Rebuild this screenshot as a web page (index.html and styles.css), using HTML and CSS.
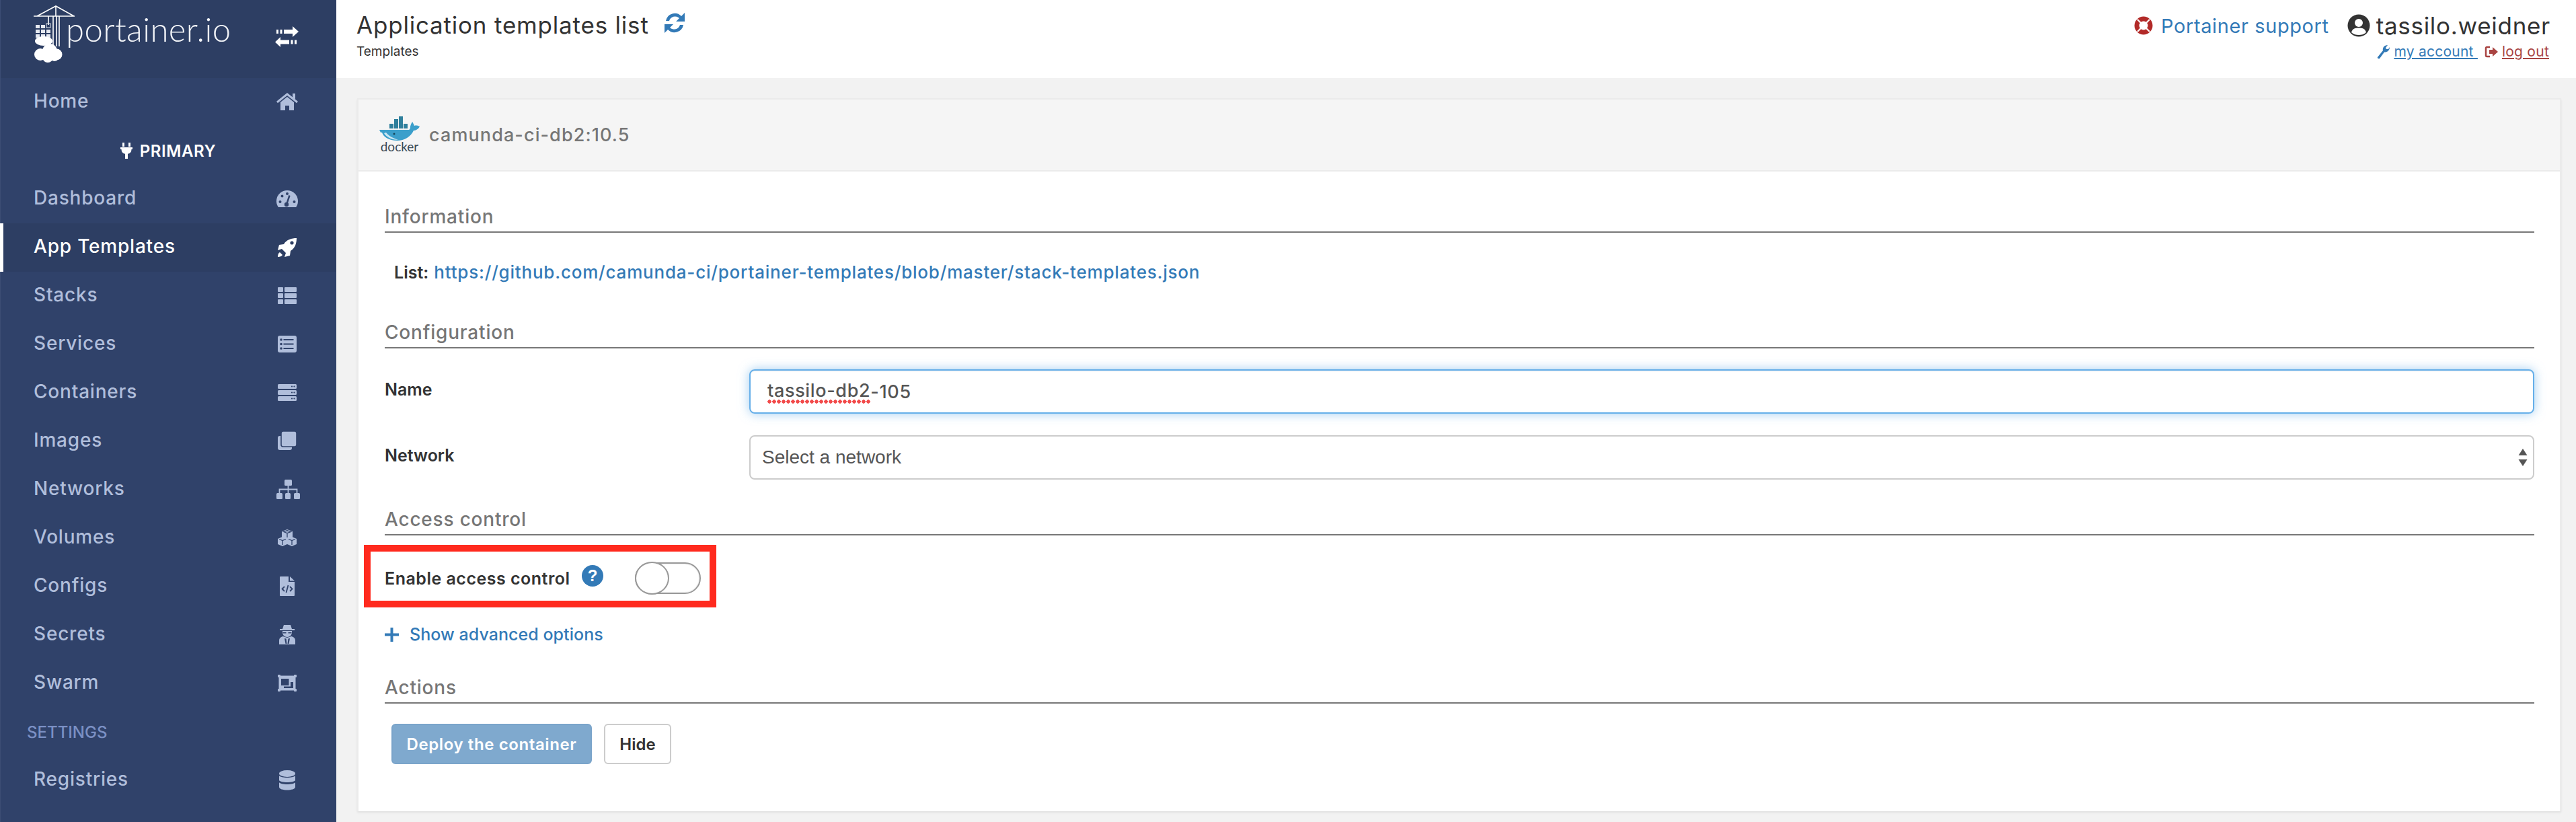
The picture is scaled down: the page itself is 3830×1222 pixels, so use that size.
FILE: index.html
```html
<!DOCTYPE html>
<html lang="en">
<head>
<meta charset="utf-8">
<title>Portainer - Application templates list</title>
<link rel="stylesheet" href="styles.css">
</head>
<body>
<div class="app">
  <aside class="sidebar">
    <div class="brand">
      <div class="logo">
        <svg class="logo-mark" viewBox="0 0 46 90" width="46" height="90">
          <g fill="none" stroke="#fff" stroke-width="1.6">
            <path d="M0 17H61M5 17L33 2L60 17M33 2V17"/>
            <path d="M29 17V62M34 17V62M38 17V62"/>
            <path d="M22 17V30"/>
          </g>
          <g fill="#e6e9f0">
            <rect x="3" y="30" width="6" height="5"/><rect x="3" y="37" width="6" height="5"/><rect x="3" y="44" width="6" height="5"/>
            <rect x="11" y="30" width="6" height="5"/><rect x="11" y="37" width="6" height="5"/><rect x="11" y="44" width="6" height="5"/>
            <rect x="19" y="37" width="6" height="5"/><rect x="19" y="44" width="6" height="5"/>
            <rect x="19" y="28" width="6" height="6" fill="none" stroke="#e6e9f0"/>
          </g>
          <g fill="#fff">
            <ellipse cx="15" cy="54" rx="13" ry="7"/>
            <circle cx="24" cy="69" r="11"/><circle cx="10" cy="74" r="9"/><circle cx="34" cy="74" r="8.500"/><circle cx="21" cy="78" r="8"/><circle cx="31" cy="78" r="6"/>
          </g>
        </svg>
        <span class="logo-text">portainer.io</span>
      </div>
      <svg class="icon swap" viewBox="0 0 36 36" width="36" height="36" fill="#fff">
        <path d="M2 8h3v6H2zM7.500 8h3v6h-3zM13 8h13V3l9 8-9 8v-5H13z"/>
        <path d="M23.500 23.500h3v6h-3zM29 23.500h3v6h-3zM21 23.500H8V19L0 26.500 8 34v-4.500h13z"/>
      </svg>
    </div>
    <nav class="nav">
      <a class="nav-row">
        <span>Home</span>
        <svg class="icon" viewBox="0 0 36 36" width="36" height="36"><path d="M3 18L18 6L33 18" fill="none" stroke="currentColor" stroke-width="3"/><path d="M26 5h4v9l-4-3zM8 18L18 10L28 18V30H21V23H15V30H8z" fill="currentColor"/></svg>
      </a>
      <div class="nav-endpoint">
        <svg viewBox="0 0 20 24" width="20" height="24"><path d="M4 0h3v6H4zM13 0h3v6h-3zM1 7h18v3h-1.500a7 7 0 0 1-5.500 6.800V24H8v-7.200A7 7 0 0 1 2.500 10H1z" fill="#fff"/></svg>
        <span>PRIMARY</span>
      </div>
      <a class="nav-row">
        <span>Dashboard</span>
        <svg class="icon" viewBox="0 0 36 36" width="36" height="36"><path d="M4.800 30A16 16 0 1 1 31.200 30Z" fill="currentColor"/><g fill="#30426a"><circle cx="7.500" cy="22" r="2"/><circle cx="10.500" cy="13.500" r="2"/><circle cx="18" cy="10" r="2"/><circle cx="28.500" cy="22" r="2"/><circle cx="17" cy="26" r="3.200"/></g><path d="M17 26L21.500 12.500" stroke="#30426a" stroke-width="2.400"/></svg>
      </a>
      <a class="nav-row active">
        <span>App Templates</span>
        <svg class="icon" viewBox="0 0 36 36" width="36" height="36"><path d="M32 4C25 4 17 6 13 13L6 14L4 22L10 20L16 26L14 32L22 30L23 23C30 19 32 11 32 4Z" fill="currentColor"/><path d="M7 25C5 26 4 29 4 32C7 32 10 31 11 29Z" fill="currentColor"/><circle cx="25" cy="11" r="2.600" fill="#2d3e63"/></svg>
      </a>
      <a class="nav-row">
        <span>Stacks</span>
        <svg class="icon" viewBox="0 0 36 36" width="36" height="36" fill="currentColor"><rect x="4" y="5" width="8" height="7" rx="1"/><rect x="14" y="5" width="18" height="7" rx="1"/><rect x="4" y="14" width="8" height="7" rx="1"/><rect x="14" y="14" width="18" height="7" rx="1"/><rect x="4" y="23" width="8" height="7" rx="1"/><rect x="14" y="23" width="18" height="7" rx="1"/></svg>
      </a>
      <a class="nav-row">
        <span>Services</span>
        <svg class="icon" viewBox="0 0 36 36" width="36" height="36"><rect x="4" y="5" width="28" height="25" rx="3" fill="currentColor"/><g fill="#30426a"><circle cx="9" cy="11" r="1.800"/><circle cx="9" cy="17.500" r="1.800"/><circle cx="9" cy="24" r="1.800"/><rect x="12.500" y="10" width="15" height="2"/><rect x="12.500" y="16.500" width="15" height="2"/><rect x="12.500" y="23" width="15" height="2"/></g></svg>
      </a>
      <a class="nav-row">
        <span>Containers</span>
        <svg class="icon" viewBox="0 0 36 36" width="36" height="36"><g fill="currentColor"><rect x="4" y="5" width="28" height="7" rx="1.500"/><rect x="4" y="14" width="28" height="7" rx="1.500"/><rect x="4" y="23" width="28" height="7" rx="1.500"/></g><g fill="#30426a"><circle cx="25" cy="8.500" r="1.100"/><circle cx="28.500" cy="8.500" r="1.100"/><circle cx="25" cy="17.500" r="1.100"/><circle cx="28.500" cy="17.500" r="1.100"/><circle cx="25" cy="26.500" r="1.100"/><circle cx="28.500" cy="26.500" r="1.100"/></g></svg>
      </a>
      <a class="nav-row">
        <span>Images</span>
        <svg class="icon" viewBox="0 0 36 36" width="36" height="36"><rect x="4" y="10" width="21" height="21" rx="3" fill="currentColor"/><rect x="9" y="3" width="23" height="23" rx="3" fill="currentColor" stroke="#30426a" stroke-width="1.600"/></svg>
      </a>
      <a class="nav-row">
        <span>Networks</span>
        <svg class="icon" viewBox="0 0 36 36" width="36" height="36"><g fill="currentColor"><rect x="14" y="3" width="11" height="9" rx="1.500"/><rect x="2" y="23" width="9" height="9" rx="1.500"/><rect x="15" y="23" width="8" height="9" rx="1.500"/><rect x="28" y="23" width="9" height="9" rx="1.500"/></g><path d="M19.500 12V23M6.500 23V17.500H32.500V23" fill="none" stroke="currentColor" stroke-width="1.800"/></svg>
      </a>
      <a class="nav-row">
        <span>Volumes</span>
        <svg class="icon" viewBox="0 0 36 36" width="36" height="36"><g fill="currentColor"><path d="M18 5L26 8V17L18 20L10 17V8Z"/><path d="M11 16L18 19V27L11 30L4 27V19Z"/><path d="M25 16L32 19V27L25 30L18 27V19Z"/></g><g fill="none" stroke="#30426a" stroke-width="1.300"><path d="M12.500 8.500L18 10.500L23.500 8.500L18 6.800ZM18 10.500V17"/><path d="M6 19.500L11 21.500L16 19.500M11 21.500V28"/><path d="M20 19.500L25 21.500L30 19.500M25 21.500V28"/></g></svg>
      </a>
      <a class="nav-row">
        <span>Configs</span>
        <svg class="icon" viewBox="0 0 36 36" width="36" height="36"><path d="M7 4A1 1 0 0 1 8 3H20V11H29V31A1 1 0 0 1 28 32H8A1 1 0 0 1 7 31Z" fill="currentColor"/><path d="M22 3L29 9.500H22Z" fill="currentColor"/><path d="M14 18L10.500 21.500L14 25M22 18L25.500 21.500L22 25M19.500 16L16.500 27" fill="none" stroke="#30426a" stroke-width="1.800"/></svg>
      </a>
      <a class="nav-row">
        <span>Secrets</span>
        <svg class="icon" viewBox="0 0 36 36" width="36" height="36"><path d="M11 9L13 3H23L25 9H29V11H7V9Z" fill="currentColor"/><path d="M11 12H25V14C25 18 22 21 18 21C14 21 11 18 11 14Z" fill="currentColor"/><path d="M6 32V26C6 23 8 21 11.500 20L18 22L24.500 20C28 21 30 23 30 26V32Z" fill="currentColor"/><path d="M11.500 14H16.500V15.500H11.500ZM19.500 14H24.500V15.500H19.500ZM14 23L16.500 23.500L17.500 31H15.500ZM22 23L19.500 23.500L18.500 31H20.500Z" fill="#30426a"/></svg>
      </a>
      <a class="nav-row">
        <span>Swarm</span>
        <svg class="icon" viewBox="0 0 36 36" width="36" height="36"><g fill="currentColor"><rect x="4" y="5" width="4" height="4" rx="1"/><rect x="28" y="5" width="4" height="4" rx="1"/><rect x="4" y="26" width="4" height="4" rx="1"/><rect x="28" y="26" width="4" height="4" rx="1"/><rect x="5.500" y="6.500" width="25" height="22"/></g><path d="M9 11H20.500V21H9ZM23 16H27V25H13V22.500H23Z" fill="#30426a"/></svg>
      </a>
      <div class="nav-heading">SETTINGS</div>
      <a class="nav-row">
        <span>Registries</span>
        <svg class="icon" viewBox="0 0 36 36" width="36" height="36" fill="currentColor"><ellipse cx="18" cy="8" rx="12" ry="5"/><path d="M6 11C8 15 28 15 30 11V18C28 22 8 22 6 18Z"/><path d="M6 21C8 25 28 25 30 21V28C30 34 6 34 6 28Z"/></svg>
      </a>
    </nav>
  </aside>
  <main class="main">
    <header class="topbar">
      <div class="page-title">
        <h1>Application templates list
          <svg class="refresh" viewBox="0 0 34 34" width="34" height="34"><path d="M4 14A13.500 13.500 0 0 1 27 7L32 2V15H19L24 10A9 9 0 0 0 9 14Z" fill="#337ab7"/><path d="M30 20A13.500 13.500 0 0 1 7 27L2 32V19H15L10 24A9 9 0 0 0 25 20Z" fill="#337ab7"/></svg>
        </h1>
        <div class="crumb">Templates</div>
      </div>
      <div class="user-area">
        <div class="user-main">
          <svg class="support-icon" viewBox="0 0 28 28" width="28" height="28"><circle cx="14" cy="14" r="10" fill="none" stroke="#b22a28" stroke-width="7"/><path d="M5 5L10 10M23 5L18 10M5 23L10 18M23 23L18 18" stroke="#fff" stroke-width="2.200"/></svg>
          <a class="support">Portainer support</a>
          <svg class="user-icon" viewBox="0 0 34 34" width="34" height="34"><circle cx="17" cy="17" r="16.500" fill="#333"/><circle cx="17" cy="13" r="6" fill="#fff"/><path d="M6 27C8 21 12 20.500 17 20.500S26 21 28 27C25 30 21 31 17 31S9 30 6 27Z" fill="#fff"/></svg>
          <span class="username">tassilo.weidner</span>
        </div>
        <div class="user-links">
          <a class="account">
            <svg viewBox="0 0 20 22" width="20" height="22"><path d="M2 19L10 9C9 5 12 1 17 1L14 5L15 7L18 7L20 4C20 9 16 12 12 11.500L5 21C3.500 22 1 20.500 2 19Z" fill="#337ab7"/></svg>
            <u>my account </u>
          </a>
          <a class="logout">
            <svg viewBox="0 0 20 20" width="20" height="20"><path d="M8 3H3.500A1.500 1.500 0 0 0 2 4.500V15.500A1.500 1.500 0 0 0 3.500 17H8" fill="none" stroke="#a94442" stroke-width="2.500"/><path d="M7 7H12V3L20 10L12 17V13H7Z" fill="#a94442"/></svg>
            <u>log out</u>
          </a>
        </div>
      </div>
    </header>
    <section class="content">
      <div class="card">
        <div class="card-head">
          <div class="docker">
            <svg viewBox="0 0 62 36" width="62" height="36">
              <g fill="#2f7f9c"><rect x="16" y="11" width="6" height="7"/><rect x="23" y="11" width="6" height="7"/><rect x="23" y="4" width="6" height="7"/><rect x="30" y="11" width="6" height="7"/><rect x="30" y="4" width="6" height="7"/><rect x="30" y="0" width="6" height="4"/><rect x="37" y="11" width="6" height="7"/></g>
              <path d="M1 20H44C46 20 47 19 47 15C48 11 49 10 50 8C51 10 52 11 53 14C56 13 59 14 61 15C59 19 55 21 52 21C48 30 38 36 28 36C14 36 7 30 5 24H3Z" fill="#3b9fcb"/>
              <path d="M8 25C12 32 22 35 29 35C20 32 14 28 11 24Z" fill="#c9e6f2"/>
              <circle cx="23" cy="26" r="1.500" fill="#18485a"/>
            </svg>
            <span class="docker-word">docker</span>
          </div>
          <span class="card-name">camunda-ci-db2:10.5</span>
        </div>
        <form class="card-body">
          <h2 class="section first">Information</h2>
          <div class="info-row"><b>List:</b> <a>https://github.com/camunda-ci/portainer-templates/blob/master/stack-templates.json</a></div>
          <h2 class="section gap-info">Configuration</h2>
          <div class="field first-field">
            <label>Name</label>
            <div class="control focus"><span class="misspelt">tassilo-db2</span>-105</div>
          </div>
          <div class="field second-field">
            <label>Network</label>
            <div class="control select">
              <span>Select a network</span>
              <svg viewBox="0 0 14 26" width="14" height="26" fill="#555"><path d="M7 0L13.500 10H.5ZM7 26L.5 16H13.500Z"/></svg>
            </div>
          </div>
          <h2 class="section gap-access">Access control</h2>
          <div class="access-row">
            <label>Enable access control</label>
            <svg class="help" viewBox="0 0 32 32" width="32" height="32"><circle cx="16" cy="16" r="16" fill="#337ab7"/><text x="16" y="24" class="help-mark">?</text></svg>
            <span class="toggle"><span class="knob"></span></span>
          </div>
          <a class="advanced">
            <svg viewBox="0 0 21 21" width="21" height="21"><path d="M8.500 0h4v8.500H21v4h-8.500V21h-4v-8.500H0v-4h8.500z" fill="#337ab7"/></svg>
            <span>Show advanced options</span>
          </a>
          <h2 class="section gap-actions">Actions</h2>
          <div class="actions">
            <button type="button" class="btn primary">Deploy the container</button>
            <button type="button" class="btn plain">Hide</button>
          </div>
        </form>
      </div>
    </section>
  </main>
</div>
</body>
</html>
```

FILE: styles.css
```css
*, *::before, *::after { box-sizing: border-box; }
html, body { margin: 0; padding: 0; }
body {
  font-family: "Inter", "Liberation Sans", sans-serif;
  color: #333;
  background: #f2f2f2;
}
.app { display: flex; width: 3830px; height: 1222px; overflow: hidden; }

/* sidebar */
.sidebar { width: 500px; flex: none; background: #30426a; color: #b0bedb; border-left: 1px solid #3c4d74; }
.brand { height: 116px; background: #2d3e63; display: flex; align-items: center; justify-content: space-between; padding: 0 55px 0 49px; }
.logo { display: flex; align-items: flex-start; height: 116px; position: relative; }
.logo-mark { margin-top: 7px; overflow: visible; flex: none; }
.logo-text { font-family: "Lato", sans-serif; font-weight: 300; font-size: 49px; line-height: 60px; color: #f2f4f8; margin: 13px 0 0 2px; letter-spacing: 0.4px; }
.swap { margin-top: -8px; }
.nav { display: flex; flex-direction: column; }
.nav-row { height: 72px; display: flex; align-items: center; justify-content: space-between; padding: 0 55px 0 49px; font-size: 28px; letter-spacing: 0.8px; font-weight: 500; color: #b0bedb; }
.nav-row span { position: relative; top: -2px; }
.nav-row.active { background: #2d3e63; color: #fff; box-shadow: inset 5px 0 0 #fff; margin-left: -1px; padding-left: 50px; }
.icon { flex: none; overflow: visible; }
.nav-endpoint { height: 72px; display: flex; align-items: center; justify-content: center; gap: 10px; color: #fff; font-size: 24px; letter-spacing: 0.6px; font-weight: 600; padding-right: 2px; }
.nav-heading { height: 72px; display: flex; align-items: center; padding-left: 39px; font-size: 24px; font-weight: 500; color: #7b90c4; }

/* top bar */
.main { flex: 1; min-width: 0; display: flex; flex-direction: column; }
.topbar { height: 116px; background: #fff; display: flex; justify-content: space-between; padding: 0 38px 0 30px; }
.page-title h1 { margin: 14px 0 0; font-size: 35px; letter-spacing: 0.8px; line-height: 46px; font-weight: 400; color: #333; display: flex; align-items: center; gap: 21px; }
.refresh { margin-top: -6px; }
.crumb { font-size: 19px; line-height: 24px; margin-top: 5px; color: #333; }
.user-area { display: flex; flex-direction: column; align-items: flex-end; }
.user-main { display: flex; align-items: center; margin-top: 14px; height: 48px; }
.support-icon { margin-right: 12px; }
.support { color: #337ab7; font-size: 29px; letter-spacing: 0.6px; }
.user-icon { margin: 0 9px 0 27px; }
.username { font-size: 35px; letter-spacing: 0.7px; color: #333; }
.user-links { display: flex; gap: 10px; font-size: 21px; letter-spacing: 0.25px; margin: 2px 2px 0 0; }
.user-links a { display: flex; align-items: center; gap: 0; }
.user-links u { white-space: pre; }
.account { color: #337ab7; }
.logout { color: #a94442; }
.user-links svg { margin-right: 6px; }

/* card */
.content { flex: 1; padding: 30px 22px 0 31px; background: #f2f2f2; }
.card { background: #fff; border: 2px solid #ebebeb; border-width: 2px 2px 0 2px; box-shadow: 0 2px 3px rgba(0,0,0,.08); }
.card-head { height: 107px; background: #f5f5f5; border-bottom: 2px solid #ebebeb; display: flex; align-items: center; gap: 13px; padding-left: 30px; }
.docker { width: 62px; display: flex; flex-direction: column; align-items: center; margin-top: -2px; }
.docker svg { display: block; }
.docker-word { font-size: 19px; line-height: 18px; color: #3a4a55; font-family: "Lato", sans-serif; }
.card-name { font-size: 27px; letter-spacing: 1.1px; color: #767676; font-weight: 500; }
.card-body { padding: 45px 38px 70px 39px; }

.section { margin: 0; height: 46px; line-height: 44px; font-size: 28px; letter-spacing: 0.8px; font-weight: 500; color: #767676; border-bottom: 2px solid #777; }
.gap-info { margin-top: 47px; }
.gap-access { margin-top: 37px; }
.gap-actions { margin-top: 37px; }
.info-row { margin: 39px 0 0 14px; line-height: 40px; font-size: 26px; letter-spacing: 0.8px; }
.info-row b { font-weight: 600; font-size: 25px; letter-spacing: 0; }
.info-row a { color: #337ab7; font-weight: 500; }

.field { display: flex; align-items: center; }
.field label { width: 542px; flex: none; font-size: 25px; font-weight: 600; color: #333; position: relative; top: -3px; }
.first-field { margin-top: 31px; }
.second-field { margin-top: 32px; }
.control { flex: 1; height: 66px; border: 2px solid #ccc; border-radius: 8px; display: flex; align-items: center; }
.control.focus { border-color: #66afe9; box-shadow: 0 0 16px rgba(102,175,233,.6), inset 0 1px 1px rgba(0,0,0,.08); padding-left: 25px; font-size: 27px; letter-spacing: 0.65px; color: #555; font-weight: 500; }
.misspelt { padding-bottom: 3px; background: radial-gradient(circle at 3px 3px, #f24a4a 2.500px, transparent 3px) left bottom / 7px 6px repeat-x; }
.control.select { justify-content: space-between; padding: 0 8px 0 17px; font-family: "Liberation Sans", sans-serif; font-size: 28px; color: #555; }

.access-row { position: relative; display: flex; align-items: center; width: 470px; height: 49px; margin-top: 39px; }
.access-row::after { content: ""; position: absolute; left: -31px; top: -25px; width: 524px; height: 93px; border: 10px solid #ff2a1e; pointer-events: none; }
.access-row label { font-size: 25px; letter-spacing: 0.5px; font-weight: 600; color: #333; white-space: nowrap; width: 293px; flex: none; }
.help { margin-top: -8px; flex: none; }
.help-mark { font-family: "Liberation Sans", sans-serif; font-weight: 700; font-size: 24px; fill: #fff; text-anchor: middle; }
.toggle { position: relative; display: block; width: 98px; height: 47px; margin-left: 47px; border: 2px solid #999; border-radius: 24px; flex: none; box-shadow: inset 0 0 2px rgba(0,0,0,.2); }
.knob { position: absolute; left: -2px; top: -3px; width: 51px; height: 49px; background: #fff; border: 2px solid #999; border-radius: 50%; }

.advanced { display: flex; align-items: center; gap: 16px; height: 40px; margin-top: 39px; color: #337ab7; font-size: 25px; letter-spacing: 0.05px; font-weight: 500; }
.actions { display: flex; gap: 18px; margin: 30px 0 0 10px; }
.btn { height: 60px; border-radius: 6px; font: inherit; font-size: 24px; font-weight: 600; display: block; letter-spacing: 0.6px; }
.btn.primary { width: 298px; background: #7fa9ce; border: 2px solid #7aa4ca; color: #fff; padding: 0; }
.btn.plain { width: 100px; background: #fff; border: 2px solid #ccc; color: #333; padding: 0; letter-spacing: 0; }
```
